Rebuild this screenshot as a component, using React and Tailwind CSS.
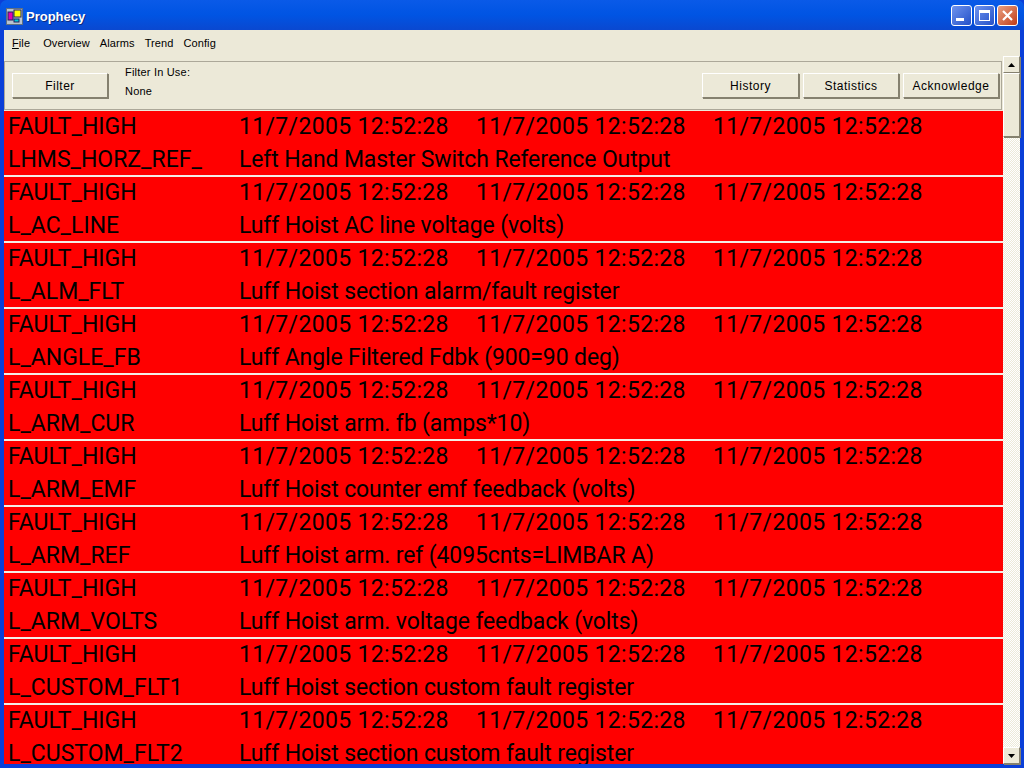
import React from 'react';

const stamp = '11/7/2005 12:52:28';

const alarms = [
  ['LHMS_HORZ_REF_', 'Left Hand Master Switch Reference Output'],
  ['L_AC_LINE', 'Luff Hoist AC line voltage (volts)'],
  ['L_ALM_FLT', 'Luff Hoist section alarm/fault register'],
  ['L_ANGLE_FB', 'Luff Angle Filtered Fdbk (900=90 deg)'],
  ['L_ARM_CUR', 'Luff Hoist arm. fb (amps*10)'],
  ['L_ARM_EMF', 'Luff Hoist counter emf feedback (volts)'],
  ['L_ARM_REF', 'Luff Hoist arm. ref (4095cnts=LIMBAR A)'],
  ['L_ARM_VOLTS', 'Luff Hoist arm. voltage feedback (volts)'],
  ['L_CUSTOM_FLT1', 'Luff Hoist section custom fault register'],
  ['L_CUSTOM_FLT2', 'Luff Hoist section custom fault register'],
];

const raised = 'border border-t-white border-l-white border-r-[#85816f] border-b-[#85816f] shadow-[1px_1px_0_#85816f]';

const AppIcon = () => (
  <svg width="17" height="17" viewBox="0 0 17 17" className="shrink-0 mt-[2px]">
    <rect x="0.5" y="0.5" width="16" height="16" fill="#b8c4d0" stroke="#607080" />
    <rect x="2" y="4" width="5" height="8" fill="#e000b0" stroke="#202060" />
    <rect x="8" y="2" width="7" height="7" fill="#ffff00" stroke="#202060" />
    <rect x="8" y="11" width="5" height="3" fill="#00c8d8" stroke="#202060" />
  </svg>
);

const WinButton = ({ kind }) => (
  <div className={`w-[21px] h-[21px] rounded-[3px] border border-white flex items-center justify-center ${kind === 'close' ? 'bg-gradient-to-br from-[#e8a080] to-[#c03810]' : 'bg-gradient-to-br from-[#6f93ee] to-[#2450c8]'}`}>
    {kind === 'min' && <div className="w-[8px] h-[3px] bg-white mt-[9px] mr-[3px]" />}
    {kind === 'max' && <div className="w-[11px] h-[11px] border border-white border-t-[3px]" />}
    {kind === 'close' && (
      <svg width="13" height="13" viewBox="0 0 13 13">
        <path d="M2 2 L11 11 M11 2 L2 11" stroke="white" strokeWidth="2.2" />
      </svg>
    )}
  </div>
);

const PanelButton = ({ width, children }) => (
  <div className={`${width} h-[25px] bg-[#ece9d8] ${raised} flex items-center justify-center text-[12px] tracking-[0.5px] text-black`}>
    {children}
  </div>
);

const Row = ({ name, desc }) => (
  <div className="h-[66px] shrink-0 bg-[#ff0000] border-b-2 border-[#f4eee6] font-['Roboto',sans-serif] text-[23px] leading-[32px] text-black whitespace-nowrap">
    <div className="flex h-[33px] tracking-[0.33px]">
      <span className="w-[235px] pl-[4px] shrink-0 tracking-normal">FAULT_HIGH</span>
      <span className="w-[237px] shrink-0">{stamp}</span>
      <span className="w-[237px] shrink-0">{stamp}</span>
      <span>{stamp}</span>
    </div>
    <div className="flex h-[31px]">
      <span className="w-[235px] pl-[4px] shrink-0">{name}</span>
      <span className="tracking-[-0.12px]">{desc}</span>
    </div>
  </div>
);

export default function App() {
  return (
    <div className="w-[1024px] h-[768px] flex flex-col overflow-hidden bg-[#0a3fd8] font-['Liberation_Sans',sans-serif]">
      {/* Title bar */}
      <div className="h-[30px] shrink-0 flex items-center pl-[6px] pr-[6px] gap-[3px] rounded-t-[7px] bg-gradient-to-b from-[#0a5ae8] via-[#0054e3] to-[#0a48d0]">
        <AppIcon />
        <span className="mt-[3px] text-[13px] font-bold text-white [text-shadow:1px_1px_0_#0a2a80]">Prophecy</span>
        <div className="ml-auto flex gap-[2px]">
          <WinButton kind="min" />
          <WinButton kind="max" />
          <WinButton kind="close" />
        </div>
      </div>

      {/* Window body */}
      <div className="flex-1 min-h-0 mx-[4px] mb-[4px] flex flex-col bg-[#ece9d8]">
        <div className="h-[26px] shrink-0 flex items-center pl-[8px] gap-[10px] text-[11px] tracking-[0.1px] text-black">
          <span className="mr-[3px]"><span className="underline">F</span>ile</span>
          <span>Overview</span>
          <span>Alarms</span>
          <span>Trend</span>
          <span>Config</span>
        </div>
        <div className="flex-1 min-h-0 flex">
          <div className="flex-1 min-w-0 flex flex-col">
            <div className="h-[49px] mt-[5px] mr-[1px] shrink-0 border border-[#aca899] flex items-center pl-[7px] pr-[2px]">
              <PanelButton width="w-[96px]">Filter</PanelButton>
              <div className="ml-[17px] -mt-[8px] flex flex-col gap-[6px] text-[11px] leading-[13px] tracking-[0.2px] text-black">
                <span>Filter In Use:</span>
                <span>None</span>
              </div>
              <div className="ml-auto flex gap-[4px]">
                <PanelButton width="w-[97px]">History</PanelButton>
                <PanelButton width="w-[96px]">Statistics</PanelButton>
                <PanelButton width="w-[96px]">Acknowledge</PanelButton>
              </div>
            </div>
            <div className="flex-1 min-h-0 mt-[1px] flex flex-col overflow-hidden">
              {alarms.map(([name, desc]) => (
                <Row key={name} name={name} desc={desc} />
              ))}
            </div>
          </div>

          {/* Scrollbar */}
          <div className="w-[17px] shrink-0 flex flex-col bg-[repeating-conic-gradient(#ffffff_0_25%,#ece9d8_0_50%)] bg-[length:2px_2px]">
            <div className={`h-[17px] shrink-0 bg-[#ece9d8] ${raised} flex items-center justify-center`}>
              <svg width="7" height="4" viewBox="0 0 7 4"><path d="M3.5 0 L7 4 L0 4 Z" fill="black" /></svg>
            </div>
            <div className={`h-[64px] shrink-0 bg-[#ece9d8] ${raised}`} />
            <div className="flex-1" />
            <div className={`h-[17px] shrink-0 bg-[#ece9d8] ${raised} flex items-center justify-center`}>
              <svg width="7" height="4" viewBox="0 0 7 4"><path d="M0 0 L7 0 L3.5 4 Z" fill="black" /></svg>
            </div>
          </div>
        </div>
      </div>
    </div>
  );
}
